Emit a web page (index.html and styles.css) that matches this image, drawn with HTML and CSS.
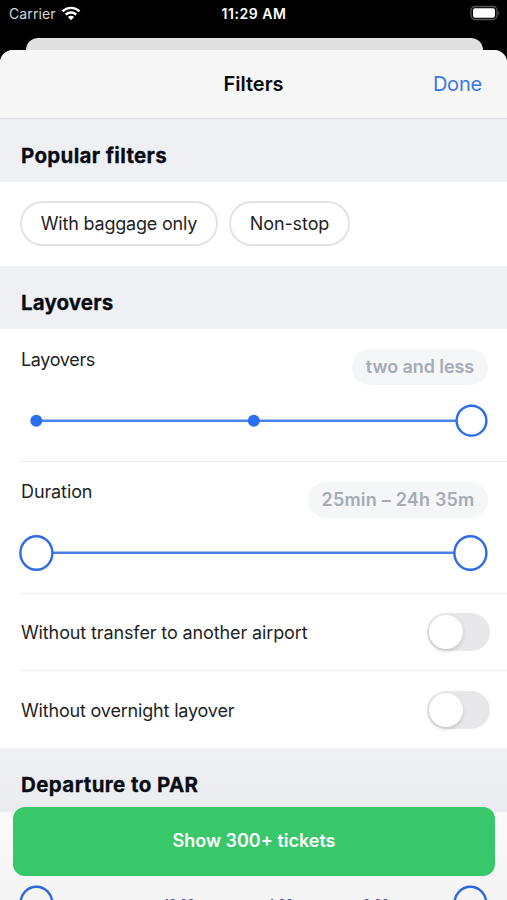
FILE: index.html
```html
<!DOCTYPE html>
<html lang="en">
<head>
<meta charset="utf-8">
<title>Filters</title>
<link rel="stylesheet" href="styles.css">
</head>
<body>
<div class="phone">
  <div class="status">
    <div class="carrier"><span class="carrier-name">Carrier</span>
      <svg class="wifi" width="20" height="15" viewBox="0 0 20 15" fill="none" stroke="#fff" stroke-width="2.4"><path d="M1.500 5.300a12.200 12.200 0 0 1 17 0"/><path d="M4.700 8.600a7.600 7.600 0 0 1 10.600 0"/><path d="M10 14.200 6.900 11.100a4.400 4.400 0 0 1 6.200 0z" fill="#fff" stroke="none"/></svg>
    </div>
    <span class="time">11:29 AM</span>
    <svg class="battery" width="31" height="16" viewBox="0 0 31 16"><rect x="1" y="1.500" width="26" height="13" rx="4" fill="none" stroke="#555" stroke-width="1.300"/><rect x="3" y="3.200" width="22" height="9.600" rx="2" fill="#fff"/><path d="M28.500 5.700q2 2.300 0 4.600z" fill="#555"/></svg>
  </div>
  <div class="back-sheet"></div>
  <main class="sheet">
    <header class="nav"><span></span><h1 class="title">Filters</h1><a class="done">Done</a></header>
    <h2 class="section popular">Popular filters</h2>
    <div class="chips"><button class="chip baggage">With baggage only</button><button class="chip nonstop">Non-stop</button></div>
    <h2 class="section layovers">Layovers</h2>
    <div class="range first">
      <div class="range-head"><span class="label stops">Layovers</span><span class="value two">two and less</span></div>
      <svg class="slider" width="470" height="40" viewBox="0 0 470 40"><path d="M16 19.800H450" stroke="#4a84ee" stroke-width="2.400"/><circle cx="16.300" cy="19.700" r="6" fill="#2b6ff3"/><circle cx="233.800" cy="19.700" r="6" fill="#2b6ff3"/><circle cx="451.500" cy="19.700" r="14.900" fill="#fff" stroke="#2f6ce5" stroke-width="2.400"/></svg>
    </div>
    <div class="range">
      <div class="range-head"><span class="label duration">Duration</span><span class="value hours">25min – 24h 35m</span></div>
      <svg class="slider" width="470" height="40" viewBox="0 0 470 40"><path d="M16 18.800H450" stroke="#4a7ee6" stroke-width="2.400"/><ellipse cx="16.400" cy="19" rx="16" ry="16.800" fill="#fff" stroke="#2f6ce5" stroke-width="2.400"/><ellipse cx="450.400" cy="19" rx="16" ry="16.800" fill="#fff" stroke="#2f6ce5" stroke-width="2.400"/></svg>
    </div>
    <div class="toggle-row"><span class="label transfer">Without transfer to another airport</span><span class="switch"><i class="knob"></i></span></div>
    <div class="toggle-row last"><span class="label overnight">Without overnight layover</span><span class="switch"><i class="knob"></i></span></div>
    <h2 class="section departure">Departure to PAR</h2>
    <div class="times">
      <svg class="slider" width="470" height="40" viewBox="0 0 470 40"><ellipse cx="16.400" cy="20.500" rx="16" ry="16.800" fill="#fff" stroke="#2f6ce5" stroke-width="2.400"/><ellipse cx="450.400" cy="20.500" rx="16" ry="16.800" fill="#fff" stroke="#2f6ce5" stroke-width="2.400"/></svg>
      <div class="ticks"><span>12:00</span><span>4:00</span><span>8:00</span></div>
    </div>
  </main>
  <div class="shade"></div>
  <button class="cta"><span class="cta-text">Show 300+ tickets</span></button>
</div>
</body>
</html>
```
FILE: styles.css
```css
* { box-sizing: border-box; }
html, body { margin: 0; width: 507px; height: 900px; overflow: hidden; }
body { font-family: Inter, "Liberation Sans", sans-serif; background: #000; color: #1d1f24; }
button { font: inherit; color: inherit; padding: 0; }
h1, h2 { margin: 0; }
span, h1, h2, a, button { white-space: nowrap; }
.phone { position: relative; width: 507px; height: 900px; overflow: hidden; background: #000; }
.status { display: grid; grid-template-columns: 1fr auto 1fr; align-items: center; height: 27px; padding: 0 6px 0 9px; color: #fff; }
.carrier { display: flex; align-items: center; gap: 5px; font-size: 14px; letter-spacing: .1px; color: #d8d8d8; }
.wifi { margin-top: -1px; }
.time { font-size: 14px; font-weight: 600; letter-spacing: .55px; margin-right: 2px; }
.battery { justify-self: end; margin-top: -1px; }
.back-sheet { height: 12px; margin: 11px 24px 0 26px; background: #e0e0e0; border-radius: 12px 12px 0 0; }
.sheet { height: 850px; background: #fff; border-radius: 13px 13px 0 0; overflow: hidden; }
.nav { height: 69px; display: grid; grid-template-columns: 1fr auto 1fr; align-items: center; padding: 0 25px; background: #f7f7f7; border-bottom: 1px solid #dcdfe2; }
.title { font-size: 20px; font-weight: 600; color: #08090c; }
.done { justify-self: end; font-size: 20px; letter-spacing: -.2px; color: #3b76e8; }
.section { height: 63px; padding: 10px 21px 0; line-height: 54px; background: #eef0f4; font-size: 20.5px; font-weight: 700; color: #090c14; -webkit-text-stroke: .3px #090c14; }
.popular { letter-spacing: .33px; }
.layovers { letter-spacing: .12px; }
.departure { letter-spacing: .4px; height: 64px; }
.chips { display: flex; gap: 11px; height: 84px; padding: 19px 20px 0; }
.chip { height: 45px; border: 2px solid #e0e3e7; border-radius: 23px; background: #fff; font-size: 18px; }
.baggage { width: 198px; letter-spacing: -.2px; }
.nonstop { width: 121px; letter-spacing: -.1px; }
.range { height: 132px; margin-left: 20px; border-bottom: 1px solid #e9eaec; }
.range.first { height: 133px; }
.range-head { display: flex; justify-content: space-between; height: 72px; padding: 20px 19px 0 1px; }
.range .label { line-height: 22px; }
.range .duration { line-height: 20px; letter-spacing: -.1px; }
.label { font-size: 18px; }
.stops { letter-spacing: -.35px; }
.transfer { letter-spacing: -.12px; }
.overnight { letter-spacing: -.18px; }
.value { height: 36px; line-height: 36px; border-radius: 18px; background: #f4f6f8; color: #a6abb5; font-size: 18px; font-weight: 600; text-align: center; }
.two { width: 136px; letter-spacing: -.08px; }
.hours { width: 180px; letter-spacing: .2px; }
.slider { display: block; overflow: visible; }
.toggle-row { display: flex; justify-content: space-between; align-items: center; height: 77px; margin-left: 20px; padding: 0 17px 0 1px; border-bottom: 1px solid #e9eaec; }
.toggle-row.last { height: 78px; border-bottom: 0; }
.last + .section { margin-top: -1px; }
.switch { display: block; width: 63px; height: 38px; padding: 2px; border-radius: 19px; background: #e8e8ea; }
.knob { display: block; width: 34px; height: 34px; border-radius: 50%; background: #fff; box-shadow: 0 2px 4px rgba(0,0,0,.16); }
.times { padding: 71px 0 0 20px; }
.ticks { display: grid; grid-template-columns: 103px 96px 60px; margin: -27px 0 0 144px; font-size: 12px; line-height: 16px; color: #3b5a99; }
.shade { position: absolute; left: 0; right: 0; bottom: 0; height: 150px; background: linear-gradient(transparent, rgba(0,0,0,.045)); }
.cta { position: absolute; left: 13px; top: 807px; width: 482px; height: 69px; border: 0; border-radius: 12px; background: #38c769; color: #fff; font-size: 18px; font-weight: 600; padding-bottom: 2px; }
```
